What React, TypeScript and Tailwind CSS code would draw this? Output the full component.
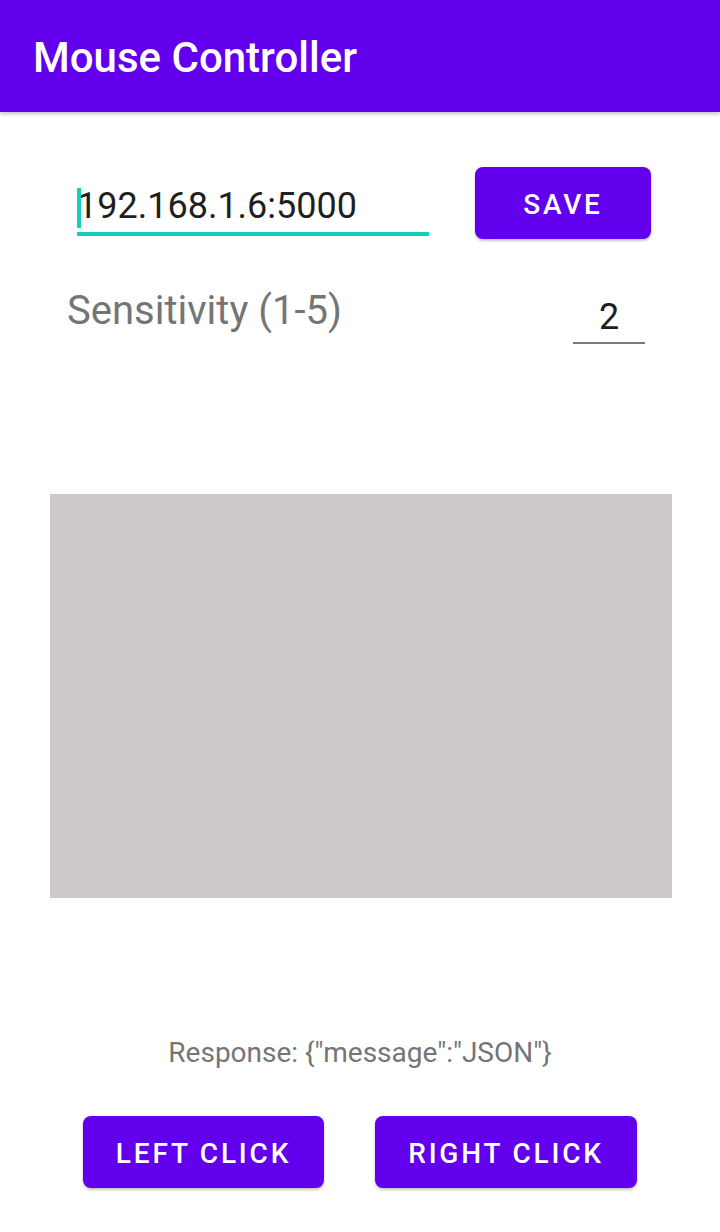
import React from "react";

export default function App() {
  return (
    <div className="w-[720px] h-[1232px] bg-white overflow-hidden font-['Roboto',_'Liberation_Sans',_sans-serif]">
      <div className="h-[112px] bg-[#6200EE] pl-[33px] pt-[38px] shadow-[0_2px_4px_rgba(0,0,0,0.25)] relative z-10">
        <div className="text-[42px] leading-[40px] font-medium text-white">Mouse Controller</div>
      </div>

      <div className="flex items-start mt-[55px]">
        <div className="ml-[77px] w-[352px] pt-[17px]">
          <div className="relative h-[44px]">
            <div className="absolute left-0 top-[4px] w-[4px] h-[40px] bg-[#14CDBB]" />
            <div className="text-[36px] leading-[44px] text-[#1f1f1f]">192.168.1.6:5000</div>
          </div>
          <div className="mt-[4px] h-[4px] bg-[#14CDBB]" />
        </div>
        <button className="ml-[46px] w-[176px] h-[72px] pt-[4px] rounded-[8px] bg-[#6200EE] text-white text-[28px] font-medium tracking-[2.8px] shadow-[0_2px_3px_rgba(0,0,0,0.22),0_0_2px_rgba(0,0,0,0.1)]">
          SAVE
        </button>
      </div>

      <div className="flex items-start mt-[48px]">
        <div className="ml-[67px] text-[40px] leading-[48px] text-[#757575]">Sensitivity (1-5)</div>
        <div className="ml-auto mr-[75px] w-[72px] pt-[8px]">
          <div className="text-[36px] leading-[44px] text-[#1f1f1f] text-center">2</div>
          <div className="mt-[3px] h-[2px] bg-[#7a7a7a]" />
        </div>
      </div>

      <div className="ml-[50px] mt-[150px] w-[622px] h-[404px] bg-[#CDC9C8]" />

      <div className="mt-[139px] text-center text-[28px] leading-[32px] text-[#757575]">
        Response: {'{"message":"JSON"}'}
      </div>

      <div className="flex justify-center gap-[51px] mt-[47px]">
        <button className="w-[241px] h-[72px] pt-[4px] rounded-[8px] bg-[#6200EE] text-white text-[28px] font-medium tracking-[2.8px] shadow-[0_2px_3px_rgba(0,0,0,0.22),0_0_2px_rgba(0,0,0,0.1)]">
          LEFT CLICK
        </button>
        <button className="w-[262px] h-[72px] pt-[4px] rounded-[8px] bg-[#6200EE] text-white text-[28px] font-medium tracking-[2.8px] shadow-[0_2px_3px_rgba(0,0,0,0.22),0_0_2px_rgba(0,0,0,0.1)]">
          RIGHT CLICK
        </button>
      </div>
    </div>
  );
}
